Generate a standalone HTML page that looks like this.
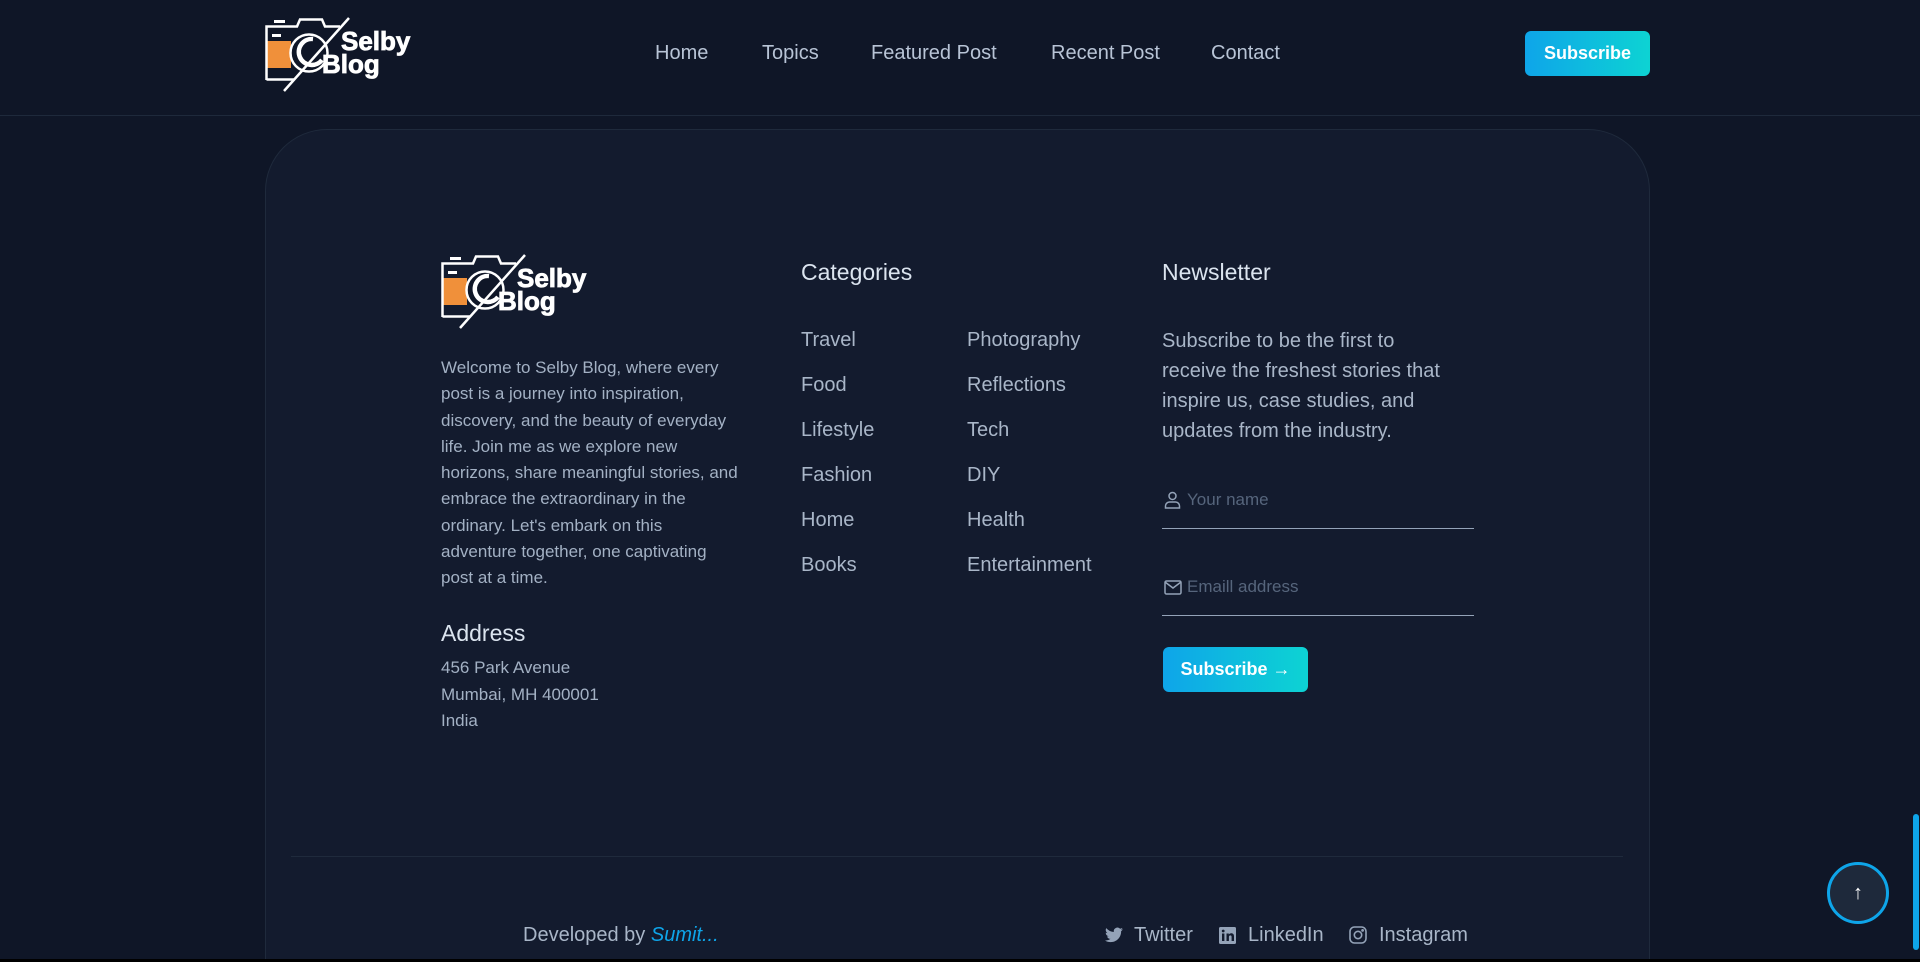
<!DOCTYPE html>
<html><head><meta charset="utf-8"><style>
*{margin:0;padding:0;box-sizing:border-box}
html{width:1920px;height:962px;overflow:hidden}
body{width:1920px;height:962px;overflow:hidden;background:#0f1627;font-family:"Liberation Sans",sans-serif;color:#94a3b8;position:relative}
.hdr{position:absolute;left:0;top:0;width:1920px;height:116px;border-bottom:1px solid #1e293b;background:#0f1627}
.nav a{position:absolute;top:42px;font-size:20px;color:#b8c4d6;text-decoration:none}
.btn{position:absolute;background:linear-gradient(90deg,#0ea5e9,#0dd3d3);color:#fff;font-weight:700;border-radius:6px;display:flex;align-items:center;justify-content:center}
.card{position:absolute;left:265px;top:129px;width:1385px;height:833px;border:1px solid #1f2a3c;border-bottom:none;border-radius:62px 62px 0 0;background:#131b2e}
.abs{position:absolute}
.h{color:#dbe4ef;font-size:23px}
.cat{position:absolute;font-size:20px;color:#a9b6c8}
.ln{position:absolute;height:1px;background:#94a3b8}
</style></head><body>
<div class="hdr"></div>
<svg class="abs" style="left:250px;top:0" width="200" height="110" viewBox="0 0 200 110">
<g id="lg"><rect x="17" y="41" width="24" height="27" fill="#f0903a"/>
<path d="M16.5 80 V26.5 H47 L50 19.5 H72 L75 26.5 H90 M16.5 79.5 H44" fill="none" stroke="#fff" stroke-width="2.5"/>
<rect x="24" y="20" width="11" height="3" fill="#fff"/><rect x="22" y="34" width="9" height="3" fill="#fff"/>
<circle cx="59" cy="53" r="18.5" fill="#0f1627" stroke="#fff" stroke-width="2.5"/><path d="M63 39 a13 13 0 1 0 9 21" fill="none" stroke="#fff" stroke-width="4.5"/>
<line x1="34" y1="91" x2="99" y2="18" stroke="#fff" stroke-width="2.5"/>
<text x="91" y="50" font-family="Liberation Sans" font-weight="700" font-size="26" fill="#fff" stroke="#fff" stroke-width="0.8">Selby</text>
<text x="72" y="73" font-family="Liberation Sans" font-weight="700" font-size="26" fill="#fff" stroke="#fff" stroke-width="0.8">Blog</text></g>
</svg>
<div class="nav"><a style="left:655px">Home</a><a style="left:762px">Topics</a><a style="left:871px">Featured Post</a><a style="left:1051px">Recent Post</a><a style="left:1211px">Contact</a></div>
<div class="btn" style="left:1525px;top:31px;width:125px;height:45px;font-size:18px">Subscribe</div>
<div class="card"></div>
<svg class="abs" style="left:426px;top:237px" width="200" height="110" viewBox="0 0 200 110"><use href="#lg"/></svg>
<div class="abs" style="left:441px;top:355px;width:300px;font-size:17px;line-height:26.3px;color:#a3b1c4">Welcome to Selby Blog, where every post is a journey into inspiration, discovery, and the beauty of everyday life. Join me as we explore new horizons, share meaningful stories, and embrace the extraordinary in the ordinary. Let's embark on this adventure together, one captivating post at a time.</div>
<div class="abs h" style="left:441px;top:620px">Address</div>
<div class="abs" style="left:441px;top:655px;font-size:17px;line-height:26.5px;color:#a3b1c4">456 Park Avenue<br>Mumbai, MH 400001<br>India</div>
<div class="abs h" style="left:801px;top:259px">Categories</div>
<div class="cat" style="left:801px;top:329px">Travel</div><div class="cat" style="left:967px;top:329px">Photography</div>
<div class="cat" style="left:801px;top:374px">Food</div><div class="cat" style="left:967px;top:374px">Reflections</div>
<div class="cat" style="left:801px;top:419px">Lifestyle</div><div class="cat" style="left:967px;top:419px">Tech</div>
<div class="cat" style="left:801px;top:464px">Fashion</div><div class="cat" style="left:967px;top:464px">DIY</div>
<div class="cat" style="left:801px;top:509px">Home</div><div class="cat" style="left:967px;top:509px">Health</div>
<div class="cat" style="left:801px;top:554px">Books</div><div class="cat" style="left:967px;top:554px">Entertainment</div>
<div class="abs h" style="left:1162px;top:259px">Newsletter</div>
<div class="abs" style="left:1162px;top:326px;width:300px;font-size:20px;line-height:30px;color:#a9b6c8">Subscribe to be the first to receive the freshest stories that inspire us, case studies, and updates from the industry.</div>
<svg class="abs" style="left:1164px;top:491px" width="17" height="18" viewBox="0 0 17 18" fill="none" stroke="#94a3b8" stroke-width="1.5"><circle cx="8.5" cy="5" r="3.5"/><path d="M1.5 17v-2a4 4 0 0 1 4-4h6a4 4 0 0 1 4 4v2z"/></svg>
<div class="abs" style="left:1187px;top:490px;font-size:17px;color:#56657c">Your name</div>
<div class="ln" style="left:1162px;top:528px;width:312px"></div>
<svg class="abs" style="left:1164px;top:580px" width="18" height="15" viewBox="0 0 18 15" fill="none" stroke="#94a3b8" stroke-width="1.5"><rect x="1" y="1" width="16" height="13" rx="1.5"/><path d="M1 2l8 6 8-6"/></svg>
<div class="abs" style="left:1187px;top:577px;font-size:17px;color:#56657c">Emaill address</div>
<div class="ln" style="left:1162px;top:615px;width:312px"></div>
<div class="btn" style="left:1163px;top:647px;width:145px;height:45px;font-size:18px">Subscribe&nbsp;<span style="font-weight:400">→</span></div>
<div class="abs" style="left:291px;top:856px;width:1332px;height:1px;background:#1f2a3c"></div>
<div class="abs" style="left:523px;top:924px;font-size:20px;color:#a9b6c8">Developed by <i style="color:#0ea5e9">Sumit...</i></div>
<svg class="abs" style="left:1105px;top:927px" width="18" height="16" viewBox="0 0 24 20"><path fill="#94a3b8" d="M24 2.4a10 10 0 0 1-2.8.8A5 5 0 0 0 23.3.5a10 10 0 0 1-3.1 1.2A4.9 4.9 0 0 0 11.8 6 14 14 0 0 1 1.7.9a4.9 4.9 0 0 0 1.5 6.6A5 5 0 0 1 1 6.9a4.9 4.9 0 0 0 3.9 4.8 5 5 0 0 1-2.2.1 4.9 4.9 0 0 0 4.6 3.4A9.9 9.9 0 0 1 0 17.3 14 14 0 0 0 7.5 19.5c9 0 14-7.5 14-14v-.6A10 10 0 0 0 24 2.4z"/></svg>
<div class="abs" style="left:1134px;top:924px;font-size:20px;color:#a9b6c8">Twitter</div>
<svg class="abs" style="left:1219px;top:927px" width="17" height="17" viewBox="0 0 17 17"><rect width="17" height="17" rx="1.5" fill="#94a3b8"/><rect x="3" y="6.5" width="2.4" height="7.5" fill="#131b2e"/><circle cx="4.2" cy="4" r="1.4" fill="#131b2e"/><path d="M7.5 6.5h2.3v1.1c.5-.8 1.4-1.3 2.5-1.3 1.8 0 2.7 1.1 2.7 3.2V14h-2.4V10c0-1-.4-1.6-1.2-1.6S9.9 9 9.9 10v4H7.5z" fill="#131b2e"/></svg>
<div class="abs" style="left:1248px;top:924px;font-size:20px;color:#a9b6c8">LinkedIn</div>
<svg class="abs" style="left:1349px;top:926px" width="18" height="18" viewBox="0 0 18 18" fill="none" stroke="#94a3b8" stroke-width="1.6"><rect x="1" y="1" width="16" height="16" rx="4.5"/><circle cx="9" cy="9" r="3.7"/><circle cx="13.6" cy="4.4" r=".6" fill="#94a3b8"/></svg>
<div class="abs" style="left:1379px;top:924px;font-size:20px;color:#a9b6c8">Instagram</div>
<div class="abs" style="left:1827px;top:862px;width:62px;height:62px;border-radius:50%;border:3px solid #0ea5e9;background:#1e293b;color:#fff;font-size:20px;display:flex;align-items:center;justify-content:center">↑</div>
<div class="abs" style="left:1913px;top:814px;width:6px;height:136px;background:#0ea5e9;border-radius:3px"></div>
<div class="abs" style="left:0;top:959px;width:1920px;height:3px;background:#000"></div>
</body></html>
